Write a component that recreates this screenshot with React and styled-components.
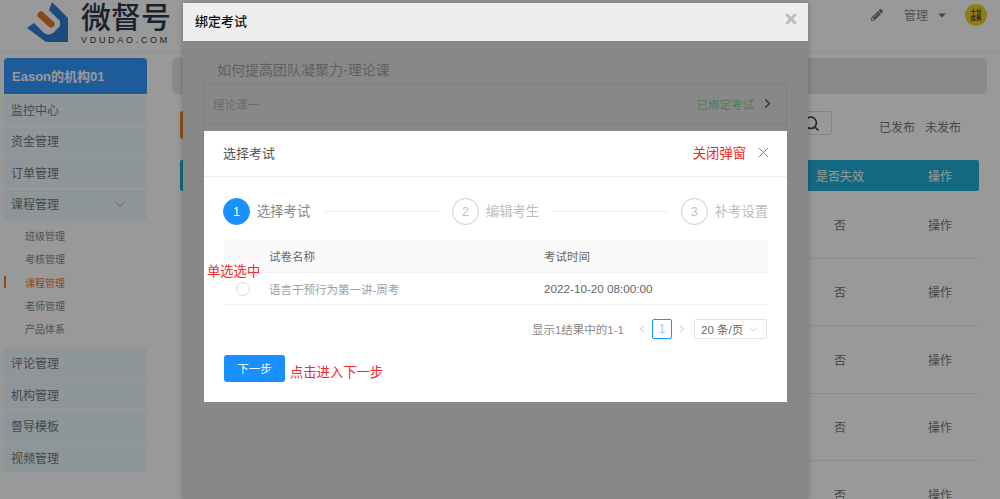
import React from 'react';
import styled, { createGlobalStyle } from 'styled-components';
import { ChevronDown, ChevronLeft, ChevronRight, Search, X } from 'lucide-react';
import { FaCaretDown, FaPencilAlt, FaTimes } from 'react-icons/fa';

const FONT = `"Liberation Sans", "Noto Sans CJK SC", sans-serif`;

const GlobalStyle = createGlobalStyle`
  html, body {
    margin: 0;
    height: 100%;
    overflow: hidden;
    background: #fff;
    font-family: ${FONT};
  }
  * {
    box-sizing: border-box;
  }
`;

const Page = styled.div`
  position: relative;
  width: 1000px;
  height: 499px;
  overflow: hidden;
`;

const TopBar = styled.header`
  display: flex;
  align-items: flex-start;
  justify-content: space-between;
  height: 52px;
  padding-left: 27px;
  border-bottom: 1px solid #f0f0f0;
`;

const Brand = styled.div`
  display: flex;
  gap: 12px;
  padding-top: 1px;
`;

const BrandText = styled.div`
  display: flex;
  flex-direction: column;
  width: 92px;
`;

const BrandName = styled.div`
  font-size: 30px;
  line-height: 33px;
  font-weight: 500;
  color: #2b3b4d;
  white-space: nowrap;
`;

const BrandUrl = styled.div`
  font-size: 9px;
  line-height: 10px;
  margin-top: 1px;
  letter-spacing: 2.7px;
  color: #2b3b4d;
  white-space: nowrap;
`;

const UserMenu = styled.div`
  display: flex;
  align-items: center;
  height: 29px;
  padding-right: 13px;
  color: #777;
`;

const ManageText = styled.span`
  font-size: 12px;
  margin-left: 21px;
  margin-right: -1px;
  color: #8a8a8a;
`;

const CaretWrap = styled.span`
  display: flex;
  margin-left: 9px;
  margin-right: 17px;
  color: #777;
`;

const Avatar = styled.div`
  display: flex;
  align-items: center;
  justify-content: center;
  width: 22px;
  height: 22px;
  border-radius: 50%;
  background: #f0cf24;
  color: #333;
  font-size: 5.5px;
  line-height: 6px;
  text-align: center;
  font-weight: 700;
`;

const Main = styled.div`
  display: flex;
`;

const Sidebar = styled.aside`
  width: 172px;
  flex-shrink: 0;
  padding: 6px 25px 0 4px;
`;

const OrgHead = styled.div`
  display: flex;
  align-items: center;
  height: 36px;
  padding: 0 0 2px 8px;
  margin-bottom: 1px;
  border-radius: 4px 4px 0 0;
  background: #3399ff;
  color: #fff;
  font-size: 13px;
  font-weight: 700;
`;

const NavItem = styled.div`
  display: flex;
  align-items: center;
  justify-content: space-between;
  height: 30px;
  margin-bottom: 1.5px;
  padding: 0 18px ${props => (props.$raised ? '2px' : '0')} 7px;
  background: #eefbff;
  color: #777;
  font-size: 12px;
`;

const SubList = styled.div`
  padding: 3px 0 7.5px;
`;

const SubItem = styled.div`
  display: flex;
  align-items: center;
  height: 23.3px;
  padding-left: 21px;
  font-size: 10px;
  color: ${props => (props.$active ? '#f0792b' : '#888')};
  position: relative;

  &::before {
    content: '';
    display: ${props => (props.$active ? 'block' : 'none')};
    position: absolute;
    left: 0;
    top: 5px;
    width: 2px;
    height: 12px;
    background: #f0792b;
  }
`;

const Content = styled.main`
  flex: 1;
  padding: 6px 13px 0 0;
`;

const TitleBar = styled.div`
  height: 36px;
  border-radius: 5px;
  background: #e6e6e6;
`;

const Toolbar = styled.div`
  display: flex;
  align-items: flex-start;
  height: 66px;
  padding-top: 17px;
  margin-left: 8px;
`;

const OrangeTab = styled.div`
  width: 40px;
  height: 28px;
  border-radius: 3px;
  background: #f0851e;
`;

const SearchBox = styled.div`
  display: flex;
  align-items: center;
  justify-content: flex-end;
  width: 60px;
  height: 24px;
  margin-left: auto;
  padding-right: 11px;
  border: 1px solid #ddd;
  border-radius: 2px;
  color: #444;
`;

const PublishLink = styled.span`
  font-size: 12px;
  line-height: 17px;
  color: #777;
  white-space: nowrap;
  margin-left: ${props => props.$gap}px;
`;

const PublishGroup = styled.div`
  display: flex;
  width: 155px;
  padding-left: 47px;
  margin-top: 9px;
`;

const TableHead = styled.div`
  display: grid;
  grid-template-columns: 1fr 100px 78px;
  column-gap: 11px;
  align-items: center;
  height: 31px;
  margin: 0 8px;
  border-radius: 2px;
  background: #21b0d6;
  color: #fff;
  font-size: 12px;
  text-align: center;
`;

const TableRow = styled.div`
  display: grid;
  grid-template-columns: 1fr 100px 78px;
  column-gap: 11px;
  align-items: center;
  height: 67.5px;
  margin: 0 8px;
  border-bottom: 1px solid #ededed;
  color: #777;
  font-size: 12px;
  text-align: center;
`;

const Backdrop = styled.div`
  position: absolute;
  inset: 0;
  background: rgba(0, 0, 0, 0.4);
`;

const OuterModal = styled.section`
  position: absolute;
  left: 183px;
  top: 3px;
  bottom: 0;
  width: 625px;
  display: flex;
  flex-direction: column;
  background: #888;
  box-shadow: 0 0 6px rgba(0, 0, 0, 0.25);
`;

const OuterHead = styled.div`
  display: flex;
  align-items: center;
  justify-content: space-between;
  height: 38px;
  flex-shrink: 0;
  padding: 0 9px 4px 12px;
  background: #eee;
  color: #111;
  font-size: 13px;
  font-weight: 500;
`;

const OuterClose = styled.span`
  display: flex;
  margin-top: -3px;
  color: #bcbcbc;
`;

const OuterBody = styled.div`
  padding: 20px 21px 0 20px;
`;

const CourseTitle = styled.div`
  padding-left: 14px;
  font-size: 14px;
  line-height: 18px;
  color: #606060;
`;

const LessonRow = styled.div`
  display: flex;
  align-items: center;
  justify-content: space-between;
  height: 41px;
  padding: 0 11px 0 9px;
  border: 1px solid #808080;
  border-top-width: ${props => (props.$first ? '1px' : '0')};
  margin-top: ${props => (props.$first ? '4px' : '0')};
  font-size: 11.5px;
  color: #6c6c6c;
`;

const Bound = styled.span`
  display: flex;
  align-items: center;
  gap: 6px;
  color: #4f7d58;
  font-size: 11.5px;
`;

const InnerModal = styled.section`
  position: absolute;
  left: 204px;
  top: 131px;
  width: 583px;
  height: 271px;
  background: #fff;
`;

const InnerHead = styled.div`
  display: flex;
  align-items: center;
  justify-content: space-between;
  height: 46px;
  padding: 0 15px 2px 19px;
  border-bottom: 1px solid #eee;
  font-size: 13px;
  color: #555;
`;

const CloseGroup = styled.div`
  display: flex;
  align-items: center;
  gap: 9px;
  color: #888;
`;

const RedNote = styled.span`
  color: #f5262a;
  font-size: 13.3px;
  white-space: nowrap;
`;

const FloatNote = styled(RedNote)`
  position: absolute;
  left: 3px;
  top: 130px;
`;

const InnerBody = styled.div`
  padding: 21px 19px 0 20px;
`;

const Steps = styled.div`
  display: flex;
  align-items: center;
  height: 27px;
`;

const StepCircle = styled.div`
  display: flex;
  align-items: center;
  justify-content: center;
  width: 27px;
  height: 27px;
  flex-shrink: 0;
  margin-left: ${props => (props.$active ? '-1px' : '0')};
  border-radius: 50%;
  font-size: 12.5px;
  border: 1px solid ${props => (props.$active ? '#1890ff' : '#ccc')};
  background: ${props => (props.$active ? '#1890ff' : '#fff')};
  color: ${props => (props.$active ? '#fff' : '#c4c4c4')};
`;

const StepLabel = styled.span`
  margin: -3px 0 0 7px;
  font-size: 13.3px;
  white-space: nowrap;
  color: ${props => (props.$active ? '#888' : '#bdbdbd')};
`;

const StepLine = styled.div`
  flex: 1;
  height: 1px;
  margin: 0 13px 0 14px;
  background: #eee;
`;

const ExamTable = styled.div`
  margin-top: 15px;
`;

const ExamHead = styled.div`
  display: grid;
  grid-template-columns: 45px 275px 1fr;
  align-items: center;
  height: 33px;
  background: #fafafa;
  border-bottom: 1px solid #f0f0f0;
  font-size: 11.5px;
  color: #666;
`;

const ExamRow = styled(ExamHead)`
  background: #fff;
  height: 32px;
  color: #a0a0a0;
`;

const ExamTime = styled.span`
  color: #666;
  font-size: 11.7px;
`;

const Radio = styled.span`
  justify-self: center;
  width: 14px;
  height: 14px;
  margin-right: 8px;
  border: 1px solid #d9d9d9;
  border-radius: 50%;
`;

const Pager = styled.div`
  display: flex;
  align-items: center;
  justify-content: flex-end;
  height: 20px;
  margin: 14px 1px 0 0;
  font-size: 11.5px;
  color: #888;
`;

const PagerArrow = styled.span`
  display: flex;
  margin: 0 ${props => props.$right}px 0 ${props => props.$left}px;
  color: #bbb;
`;

const PageBox = styled.span`
  display: flex;
  align-items: center;
  justify-content: center;
  width: 20px;
  height: 20px;
  border: 1px solid #1890ff;
  border-radius: 2px;
  color: #8fc7ff;
  font-size: 12px;
`;

const PageSize = styled.div`
  display: flex;
  align-items: center;
  justify-content: space-between;
  width: 73px;
  height: 20px;
  padding: 0 6px;
  border: 1px solid #e3e3e3;
  border-radius: 2px;
  color: #666;
  font-size: 11.5px;
`;

const Actions = styled.div`
  display: flex;
  align-items: center;
  margin-top: 16px;
`;

const NextButton = styled.button`
  width: 61px;
  height: 27px;
  padding: 0 0 2px;
  border: 0;
  border-radius: 3px;
  background: #1890ff;
  color: #fff;
  font-family: ${FONT};
  font-size: 11.5px;
`;

const ActionNote = styled(RedNote)`
  margin: 2px 0 0 5px;
  position: relative;
  top: 2px;
`;

const LogoMark = () => (
  <svg width="42" height="42" viewBox="27 1 42 42">
    <path
      d="M52 2 L68 18 L68 42 L46 42 L27 28 L34 23 L44 33 Q48 36 53 33 L60 26 L60 21 L49 10 Z"
      fill="#2f7fd0"
    />
    <path d="M41 15 L51 24" stroke="#e2781f" strokeWidth="7" strokeLinecap="round" />
  </svg>
);

const navTop = ['监控中心', '资金管理', '订单管理'];
const navSub = ['班级管理', '考核管理', '课程管理', '老师管理', '产品体系'];
const navBottom = ['评论管理', '机构管理', '督导模板', '视频管理'];

const App = () => {
  return (
    <Page>
      <GlobalStyle />
      <TopBar>
        <Brand>
          <LogoMark />
          <BrandText>
            <BrandName>微督号</BrandName>
            <BrandUrl>VDUDAO.COM</BrandUrl>
          </BrandText>
        </Brand>
        <UserMenu>
          <FaPencilAlt size={12} />
          <ManageText>管理</ManageText>
          <CaretWrap><FaCaretDown size={12} /></CaretWrap>
          <Avatar>十分<br />优秀</Avatar>
        </UserMenu>
      </TopBar>

      <Main>
        <Sidebar>
          <OrgHead>Eason的机构01</OrgHead>
          {navTop.map(name => (
            <NavItem key={name} $raised>{name}</NavItem>
          ))}
          <NavItem $raised>
            课程管理
            <ChevronDown size={18} strokeWidth={1} color="#888" />
          </NavItem>
          <SubList>
            {navSub.map(name => (
              <SubItem key={name} $active={name === '课程管理'}>{name}</SubItem>
            ))}
          </SubList>
          {navBottom.map(name => (
            <NavItem key={name}>{name}</NavItem>
          ))}
        </Sidebar>

        <Content>
          <TitleBar />
          <Toolbar>
            <OrangeTab />
            <SearchBox><Search size={17} strokeWidth={2.4} /></SearchBox>
            <PublishGroup>
              <PublishLink $gap={0}>已发布</PublishLink>
              <PublishLink $gap={10}>未发布</PublishLink>
            </PublishGroup>
          </Toolbar>
          <TableHead>
            <span />
            <span>是否失效</span>
            <span>操作</span>
          </TableHead>
          {[0, 1, 2, 3, 4].map(i => (
            <TableRow key={i}>
              <span />
              <span>否</span>
              <span>操作</span>
            </TableRow>
          ))}
        </Content>
      </Main>

      <Backdrop />

      <OuterModal>
        <OuterHead>
          绑定考试
          <OuterClose><FaTimes size={16} /></OuterClose>
        </OuterHead>
        <OuterBody>
          <CourseTitle>如何提高团队凝聚力-理论课</CourseTitle>
          <LessonRow $first>
            理论课一
            <Bound>
              已绑定考试
              <ChevronRight size={15} color="#333" />
            </Bound>
          </LessonRow>
          <LessonRow />
        </OuterBody>
      </OuterModal>

      <InnerModal>
        <InnerHead>
          选择考试
          <CloseGroup>
            <RedNote>关闭弹窗</RedNote>
            <X size={17} strokeWidth={1.4} />
          </CloseGroup>
        </InnerHead>
        <InnerBody>
          <Steps>
            <StepCircle $active>1</StepCircle>
            <StepLabel $active>选择考试</StepLabel>
            <StepLine />
            <StepCircle>2</StepCircle>
            <StepLabel>编辑考生</StepLabel>
            <StepLine />
            <StepCircle>3</StepCircle>
            <StepLabel>补考设置</StepLabel>
          </Steps>
          <ExamTable>
            <ExamHead>
              <span />
              <span>试卷名称</span>
              <span>考试时间</span>
            </ExamHead>
            <ExamRow>
              <Radio />
              <span>语言干预行为第一讲-周考</span>
              <ExamTime>2022-10-20 08:00:00</ExamTime>
            </ExamRow>
          </ExamTable>
          <Pager>
            显示1结果中的1-1
            <PagerArrow $left={12} $right={4}><ChevronLeft size={12} /></PagerArrow>
            <PageBox>1</PageBox>
            <PagerArrow $left={4} $right={6}><ChevronRight size={12} /></PagerArrow>
            <PageSize>
              20 条/页
              <ChevronDown size={13} strokeWidth={1.2} color="#bbb" />
            </PageSize>
          </Pager>
          <Actions>
            <NextButton>下一步</NextButton>
            <ActionNote>点击进入下一步</ActionNote>
          </Actions>
        </InnerBody>
        <FloatNote>单选选中</FloatNote>
      </InnerModal>
    </Page>
  );
};

export default App;
